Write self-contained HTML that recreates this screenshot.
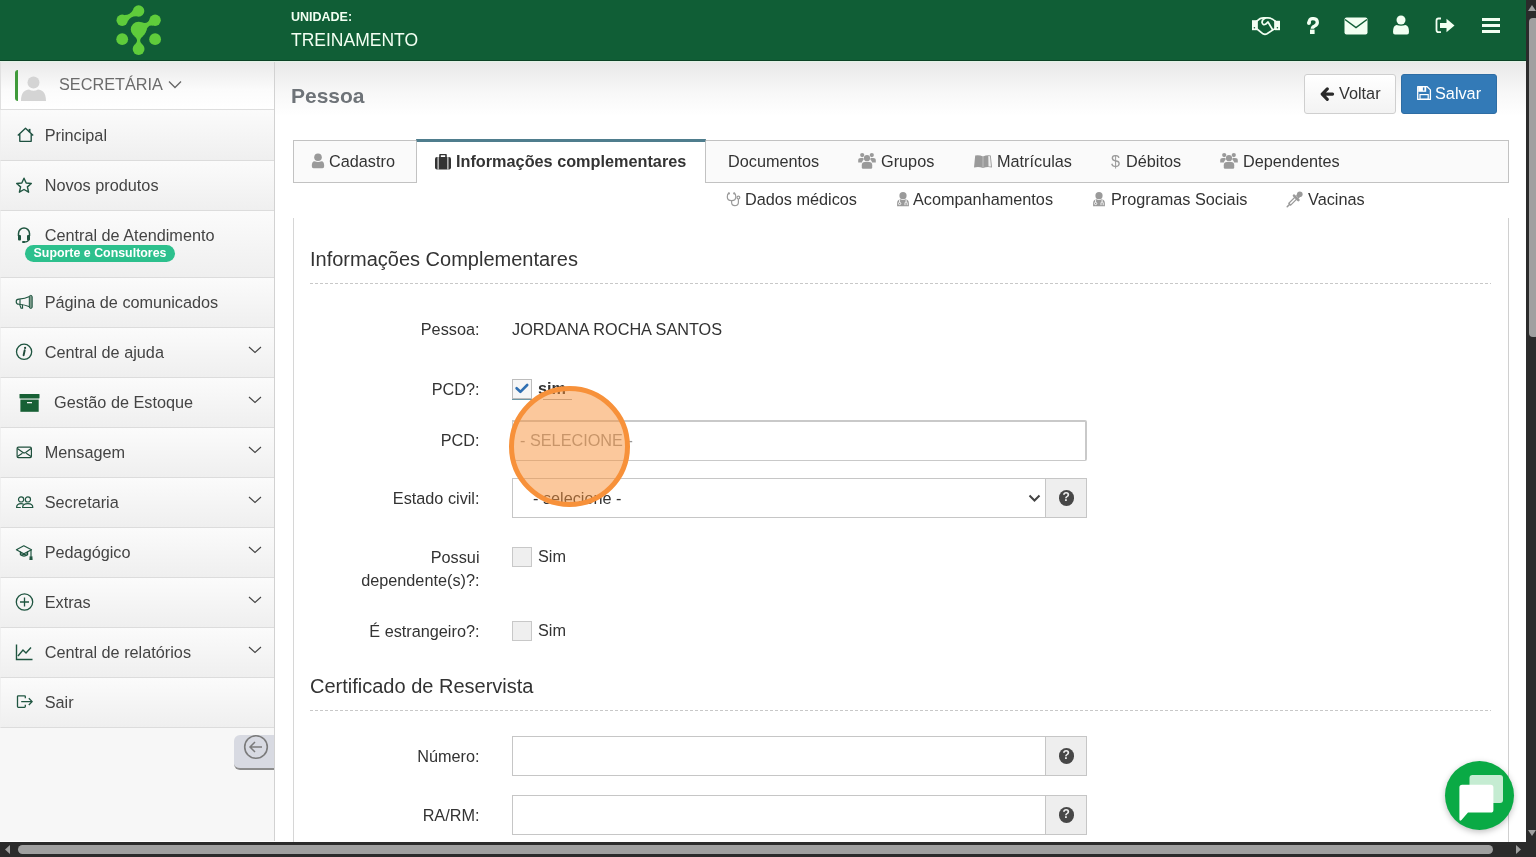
<!DOCTYPE html>
<html><head><meta charset="utf-8">
<style>
*{box-sizing:border-box;margin:0;padding:0}
html,body{width:1536px;height:857px;overflow:hidden;background:#fff;font-family:"Liberation Sans",sans-serif;color:#333}
.abs{position:absolute}
#wrap{position:absolute;left:0;top:0;width:1536px;height:857px;will-change:transform}
#hdr{position:absolute;left:0;top:0;width:1526px;height:61px;background:#105e36;border-bottom:1px solid #0b4226}
#hdr .u1{position:absolute;left:291px;top:11px;font-size:12.5px;line-height:12px;font-weight:bold;color:#f2fff2}
#hdr .u2{position:absolute;left:291px;top:31px;font-size:17.5px;line-height:18px;color:#f2fff2}
#side{position:absolute;left:0;top:61px;width:275px;height:780px;background:#f7f7f7;border-right:1px solid #d2d2d2}
#side .ub{position:absolute;left:0;top:0;width:274px;height:49px;background:linear-gradient(#e9e9e9,#fbfbfb 60%,#fff);border-bottom:1px solid #dedede;border-left:1px solid #e0e0e0}
#side .gbar{position:absolute;left:14px;top:9px;width:3px;height:31px;background:#3f9a3a;border-radius:3px 0 0 3px}
.mi{position:absolute;left:0;width:274px;border-bottom:1px solid #dcdcdc;border-left:1px solid #f0f0f0;background:linear-gradient(#fbfbfb,#f5f5f5 50%,#efefef);font-size:16.25px;line-height:16px;color:#444}
.mi .t{position:absolute;left:43.7px}
.mi svg.ic{position:absolute;left:14px}
.mi .chev{position:absolute;left:247px}
.badge{position:absolute;left:24px;top:34px;width:150px;height:17px;border-radius:9px;background:#2dc08d;color:#fff;font-size:12.4px;line-height:17px;font-weight:bold;text-align:center}
.collapse{position:absolute;left:234px;top:674px;width:40px;height:35px;background:#d8dae2;border-radius:6px 0 0 6px;border-bottom:2px solid #8c8c8c}
#main{position:absolute;left:275px;top:61px;width:1251px;height:781px;background:linear-gradient(#e8e8e8,#f7f7f7 30px,#fff 55px)}
#sbv{position:absolute;left:1526px;top:0;width:10px;height:842px;background:#2b2b2b}
#sbv .thumb{position:absolute;left:3px;top:18px;width:10px;height:319px;border-radius:4px;background:#a0a0a0}
#sbh{position:absolute;left:0;top:842px;width:1536px;height:15px;background:#2b2b2b}
#sbh .thumb{position:absolute;left:18px;top:3px;width:1475px;height:9px;border-radius:5px;background:#a0a0a0}
.btn{position:absolute;border-radius:3px;font-size:16.25px;line-height:16px}
.tt{position:absolute;font-size:16.25px;line-height:16px;color:#333;white-space:nowrap}
.lbl{position:absolute;left:300px;width:179.5px;text-align:right;font-size:16.25px;line-height:16px;color:#333}
.cb{position:absolute;width:20px;height:20px;border:1px solid #c8c8c8;background:#efefef}
.dash{position:absolute;left:310px;width:1181px;height:1px;background:repeating-linear-gradient(90deg,#c8c8c8 0 3px,transparent 3px 5px)}
.addon{position:absolute;left:1045px;width:42px;height:40px;border:1px solid #c6c6c6;background:#eee}
.addon .q{position:absolute;left:12.5px;top:11px;width:15.5px;height:15.5px;border-radius:50%;background:#474747;color:#eee;font-weight:bold;font-size:12px;line-height:15.5px;text-align:center}

</style></head><body><div id="wrap">
<div id="hdr">
  <svg class="abs" style="left:110px;top:2px" width="58" height="56" viewBox="110 2 58 56">
    <g fill="#5fcc3b">
      <circle cx="138.6" cy="11" r="5.7"/>
      <circle cx="122.2" cy="20.3" r="5.7"/>
      <circle cx="155.1" cy="20.3" r="5.7"/>
      <circle cx="138.6" cy="29.5" r="7.8"/>
      <circle cx="122.2" cy="39.2" r="5.9"/>
      <circle cx="155.1" cy="39.2" r="5.9"/>
      <circle cx="138.6" cy="49" r="5.9"/>
      <path d="M127.81 21.33 Q130.66 16.12 136.61 16.34 L132.99 9.97 Q130.14 15.18 124.19 14.96 Z"/>
      <path d="M146.26 30.97 Q147.48 24.39 153.07 25.63 L149.50 19.23 Q147.62 24.63 141.38 22.21 Z"/>
      <path d="M134.13 35.89 Q139.53 40.03 135.22 44.17 L141.98 44.17 Q137.67 40.03 143.07 35.89 Z"/>
    </g>
  </svg>
  <div class="u1">UNIDADE:</div>
  <div class="u2">TREINAMENTO</div>
  <!-- handshake -->
  <svg class="abs" style="left:1251px;top:16px" width="30" height="20" viewBox="0 0 30 20"><g fill="none" stroke="#f2fff2" stroke-width="1.7" stroke-linejoin="round" stroke-linecap="round"><path d="M6 5 Q9 1.8 12.5 1.8 H17 Q21 1.8 24 5"/><path d="M6 13 L12 17.8 Q14 19 16 17.8 L22.5 13.5 L24 13"/><path d="M14.5 2 Q11 3.5 11 6.5 Q12 9.5 14.5 8.3 L17 6 L21.5 13.5"/><path d="M6 5 V13 M24 5 V13"/></g><rect x="1" y="4.2" width="5" height="10" fill="#f2fff2"/><rect x="24" y="4.8" width="5" height="9.4" fill="#f2fff2"/><circle cx="3.4" cy="11.7" r="0.8" fill="#105e36"/><circle cx="26.4" cy="11.7" r="0.8" fill="#105e36"/></svg>
  <!-- question -->
  <svg class="abs" style="left:1305.5px;top:17px" width="14" height="18" viewBox="0 0 14 18"><path d="M3.2 6.3 Q2.8 1.6 6.8 1.6 Q11.3 1.6 11.3 5.4 Q11.3 7.6 8.8 8.9 Q6.3 10 6.3 11.8" fill="none" stroke="#f2fff2" stroke-width="3.3"/><circle cx="2.9" cy="6" r="1.9" fill="#f2fff2"/><rect x="4" y="12.6" width="4.6" height="4.4" fill="#f2fff2"/></svg>
  <!-- envelope -->
  <svg class="abs" style="left:1344px;top:17px" width="24" height="18" viewBox="0 0 24 18"><rect x="0.5" y="0.5" width="23" height="17" rx="2" fill="#f2fff2"/><path d="M1 2.5 L12 10.5 L23 2.5" fill="none" stroke="#105e36" stroke-width="1.5"/></svg>
  <!-- user -->
  <svg class="abs" style="left:1392px;top:15px" width="18" height="20" viewBox="0 0 18 20"><circle cx="9" cy="5" r="4.5" fill="#f2fff2"/><path d="M1 17 Q1 10.5 4.5 10 Q9 11.5 13.5 10 Q17 10.5 17 17 Q17 19.5 15 19.5 H3 Q1 19.5 1 17 Z" fill="#f2fff2"/></svg>
  <!-- sign out -->
  <svg class="abs" style="left:1435px;top:17px" width="21" height="17" viewBox="0 0 21 17"><path d="M6 1.5 H3.5 Q1.5 1.5 1.5 3.5 V13 Q1.5 15.2 3.5 15.2 H6" fill="none" stroke="#f2fff2" stroke-width="1.8"/><path d="M5 6 H11.5 V1.8 L19.5 8.5 L11.5 15.2 V11 H5 Z" fill="#f2fff2"/></svg>
  <!-- bars -->
  <svg class="abs" style="left:1482px;top:17px" width="19" height="17" viewBox="0 0 19 17"><rect x="0" y="1" width="18" height="3" fill="#f2fff2"/><rect x="0" y="7" width="18" height="3" fill="#f2fff2"/><rect x="0" y="13" width="18" height="3" fill="#f2fff2"/></svg>
</div>

<div id="side">
  <div class="ub">
    <div class="gbar"></div>
    <svg class="abs" style="left:19px;top:14px" width="27" height="27" viewBox="0 0 27 27"><circle cx="13.5" cy="7.5" r="6" fill="#d4d4d4"/><path d="M1 26 C1 17 5 15 9 14.5 Q13.5 17 18 14.5 C22 15 26 17 26 26 Z" fill="#d4d4d4"/></svg>
    <div class="abs" style="left:58px;top:14px;font-size:16.25px;color:#6b6b6b">SECRETÁRIA</div>
    <svg class="abs" style="left:167px;top:19px" width="14" height="9" viewBox="0 0 14 9"><path d="M1 1.5 L7 7.5 L13 1.5" fill="none" stroke="#666" stroke-width="1.3"/></svg>
  </div>
  <!-- Principal 110-160 -->
  <div class="mi" style="top:49px;height:51px">
    <svg class="ic" style="left:13.5px;top:17px" width="20" height="17" viewBox="0 0 20 17"><path d="M2.8 8.6 L10.5 1.3 L18.2 8.6 M4.8 6.8 V14.3 H16.2 V6.8" fill="none" stroke="#1d5040" stroke-width="1.35" stroke-linejoin="round"/><rect x="13.6" y="1.9" width="1.9" height="3.2" fill="#1d5040"/></svg>
    <div class="t" style="top:17px">Principal</div>
  </div>
  <div class="mi" style="top:100px;height:50px">
    <svg class="ic" style="top:16px" width="18" height="17" viewBox="0 0 18 17"><path d="M9 1.2 L11.2 6 L16.3 6.5 L12.4 9.9 L13.6 15.2 L9 12.5 L4.4 15.2 L5.6 9.9 L1.7 6.5 L6.8 6 Z" fill="none" stroke="#1f5540" stroke-width="1.4" stroke-linejoin="round"/></svg>
    <div class="t" style="top:16px">Novos produtos</div>
  </div>
  <div class="mi" style="top:150px;height:67px">
    <svg class="ic" style="top:15px" width="18" height="17" viewBox="0 0 18 17"><path d="M3.5 10 V7.5 A5.5 5.5 0 0 1 14.5 7.5 V10" fill="none" stroke="#1f5540" stroke-width="1.5"/><rect x="3" y="9" width="3" height="5.5" rx="1" fill="#1f5540"/><rect x="12" y="9" width="3" height="5.5" rx="1" fill="#1f5540"/><path d="M13.5 14 Q13 16 9 16" fill="none" stroke="#1f5540" stroke-width="1.3"/><rect x="7" y="15" width="3" height="2" rx="1" fill="#1f5540"/></svg>
    <div class="t" style="top:16px">Central de Atendimento</div>
    <div class="badge">Suporte e Consultores</div>
  </div>
  <div class="mi" style="top:217px;height:50px">
    <svg class="ic" style="top:16px" width="19" height="16" viewBox="0 0 19 16"><g fill="none" stroke="#1f5540" stroke-width="1.15" stroke-linejoin="round"><path d="M14.6 2.6 Q10 4.8 4 5.1 Q1.2 5.2 1.2 7.7 Q1.2 10.2 4 10.3 Q10 10.8 14.6 12.8"/><path d="M5 5.2 V10.2"/><path d="M4.6 10.4 L6.1 14.2 H7.6 L7.4 10.6"/></g><rect x="14.3" y="1.4" width="2.9" height="13" rx="1.4" fill="#7d9c8c" stroke="#1f5540" stroke-width="1"/></svg>
    <div class="t" style="top:16px">Página de comunicados</div>
  </div>
  <div class="mi" style="top:267px;height:50px">
    <svg class="ic" style="top:15px" width="20" height="20" viewBox="0 0 20 20"><circle cx="9.1" cy="8.8" r="7.6" fill="none" stroke="#1f5540" stroke-width="1.3"/><path d="M9.7 7.2 L8.6 12.3" fill="none" stroke="#1f4a3a" stroke-width="1.9" stroke-linecap="round"/><circle cx="10.1" cy="4.9" r="1.1" fill="#1f4a3a"/></svg>
    <div class="t" style="top:16px">Central de ajuda</div>
    <svg class="chev" style="top:18px" width="14" height="8" viewBox="0 0 14 8"><path d="M1 1 L7 6.5 L13 1" fill="none" stroke="#444" stroke-width="1.1"/></svg>
  </div>
  <div class="mi" style="top:317px;height:50px">
    <svg class="ic" style="left:17.5px;top:16px" width="22" height="19" viewBox="0 0 22 19"><rect x="0.5" y="0" width="20" height="4.4" rx="0.6" fill="#176035"/><rect x="1.4" y="5.6" width="18.3" height="12.2" fill="#176035"/><rect x="8" y="8" width="5" height="1.3" fill="#f0f0f0"/></svg>
    <div class="t" style="left:53px;top:16px">Gestão de Estoque</div>
    <svg class="chev" style="top:18px" width="14" height="8" viewBox="0 0 14 8"><path d="M1 1 L7 6.5 L13 1" fill="none" stroke="#444" stroke-width="1.1"/></svg>
  </div>
  <div class="mi" style="top:367px;height:50px">
    <svg class="ic" style="top:17.5px" width="19" height="14" viewBox="0 0 19 14"><g fill="none" stroke="#1f4f3c" stroke-width="1.2" stroke-linejoin="round"><rect x="2.1" y="1.1" width="14.3" height="10.5" rx="1.3"/><path d="M2.4 2.4 L8 6.4 Q9.3 7.3 10.6 6.4 L16.1 2.4 M2.4 10.6 L7.4 7.2 M16.1 10.6 L11.2 7.2"/></g></svg>
    <div class="t" style="top:16px">Mensagem</div>
    <svg class="chev" style="top:18px" width="14" height="8" viewBox="0 0 14 8"><path d="M1 1 L7 6.5 L13 1" fill="none" stroke="#444" stroke-width="1.1"/></svg>
  </div>
  <div class="mi" style="top:417px;height:50px">
    <svg class="ic" style="top:17px" width="19" height="14" viewBox="0 0 19 14"><g fill="none" stroke="#1f5540" stroke-width="1.2" stroke-linejoin="round"><circle cx="6.1" cy="4.4" r="2.6"/><circle cx="12.9" cy="4.4" r="2.6"/><path d="M7.6 12.5 Q7.6 8.6 12.9 8.6 Q17.8 8.6 17.8 12.5 Z"/><path d="M5.8 12.5 H1.6 Q1.6 8.6 6.1 8.6 Q7.6 8.6 8.6 9.2"/></g></svg>
    <div class="t" style="top:16px">Secretaria</div>
    <svg class="chev" style="top:18px" width="14" height="8" viewBox="0 0 14 8"><path d="M1 1 L7 6.5 L13 1" fill="none" stroke="#444" stroke-width="1.1"/></svg>
  </div>
  <div class="mi" style="top:467px;height:50px">
    <svg class="ic" style="top:17px" width="19" height="16" viewBox="0 0 19 16"><g fill="none" stroke="#1f5540" stroke-width="1.2" stroke-linejoin="round"><path d="M1.4 4.8 L8.8 0.8 L16.5 4.8 L8.8 8.8 Z"/><path d="M5.4 6.6 V9.8 Q9 12.3 12.6 9.8 V6.6"/><path d="M5.4 8.6 Q9 10.6 12.6 8.6"/><path d="M16 5 V11.5"/></g><path d="M14.6 11.3 H17.4 L17.6 15 H14.4 Z" fill="#1f5540"/></svg>
    <div class="t" style="top:16px">Pedagógico</div>
    <svg class="chev" style="top:18px" width="14" height="8" viewBox="0 0 14 8"><path d="M1 1 L7 6.5 L13 1" fill="none" stroke="#444" stroke-width="1.1"/></svg>
  </div>
  <div class="mi" style="top:517px;height:50px">
    <svg class="ic" style="top:14px;left:13px" width="20" height="20" viewBox="0 0 20 20"><circle cx="10.5" cy="10" r="8.2" fill="none" stroke="#1f5540" stroke-width="1.3"/><path d="M10.5 5.5 V14.5 M6 10 H15" fill="none" stroke="#1f5540" stroke-width="1.3"/></svg>
    <div class="t" style="top:16px">Extras</div>
    <svg class="chev" style="top:18px" width="14" height="8" viewBox="0 0 14 8"><path d="M1 1 L7 6.5 L13 1" fill="none" stroke="#444" stroke-width="1.1"/></svg>
  </div>
  <div class="mi" style="top:567px;height:50px">
    <svg class="ic" style="top:16px;left:13.3px" width="19" height="17" viewBox="0 0 19 17"><path d="M2.5 0.5 V15.5 H18.5 M4 12 L9 6 L12 9 L17 3.5" fill="none" stroke="#1f5540" stroke-width="1.4"/></svg>
    <div class="t" style="top:16px">Central de relatórios</div>
    <svg class="chev" style="top:18px" width="14" height="8" viewBox="0 0 14 8"><path d="M1 1 L7 6.5 L13 1" fill="none" stroke="#444" stroke-width="1.1"/></svg>
  </div>
  <div class="mi" style="top:617px;height:50px">
    <svg class="ic" style="top:17px;left:13.5px" width="19" height="14" viewBox="0 0 19 14"><path d="M10.3 3.2 V1.6 Q10.3 0.8 9.5 0.8 H3.3 Q2.5 0.8 2.5 1.6 V11.6 Q2.5 12.4 3.3 12.4 H9.5 Q10.3 12.4 10.3 11.6 V9.8 M6.2 6.6 H17.2 M13.8 3.2 L17.2 6.6 L13.8 10" fill="none" stroke="#1f5540" stroke-width="1.3" stroke-linejoin="round"/></svg>
    <div class="t" style="top:16px">Sair</div>
  </div>
  <div class="collapse">
    <svg class="abs" style="left:9px;top:-1px" width="26" height="26" viewBox="0 0 26 26"><circle cx="13" cy="13" r="11.3" fill="none" stroke="#7b7b7b" stroke-width="1.6"/><path d="M7 13 H19 M12 8 L7 13 L12 18" fill="none" stroke="#7b7b7b" stroke-width="1.5"/></svg>
  </div>
</div>

<div id="main"></div>
<div class="abs" style="left:0;top:61px;width:1526px;height:1px;background:#e2f2e6"></div>
<div class="abs" style="left:291px;top:84.5px;font-size:21px;font-weight:bold;color:#6e7378;line-height:21px">Pessoa</div>
<!-- buttons -->
<div class="btn" style="left:1304px;top:74px;width:92px;height:40px;background:linear-gradient(#fff,#f3f3f3);border:1px solid #cfcfcf;color:#333">
  <svg class="abs" style="left:15px;top:12px" width="15" height="15" viewBox="0 0 15 15"><path d="M12.6 7.1 H4.2 M7.3 1.9 L2.2 7.1 L7.3 12.3" fill="none" stroke="#2a2a2a" stroke-width="3.1" stroke-linejoin="round" stroke-linecap="round"/></svg>
  <div class="abs" style="left:34px;top:10px">Voltar</div>
</div>
<div class="btn" style="left:1401px;top:74px;width:96px;height:40px;background:#337ab7;border:1px solid #2e6da4;color:#fff">
  <svg class="abs" style="left:15px;top:11px" width="15" height="15" viewBox="0 0 15 15"><path d="M0.7 0.7 H10.2 L13.4 3.9 V13.4 H0.7 Z" fill="none" stroke="#fff" stroke-width="1.3" stroke-linejoin="round"/><rect x="1.2" y="1" width="8" height="4.8" fill="#fff"/><rect x="5.9" y="1.4" width="1.5" height="3.1" fill="#337ab7"/><rect x="3" y="8.6" width="8.2" height="4.6" fill="none" stroke="#fff" stroke-width="1.2"/></svg>
  <div class="abs" style="left:33px;top:10px">Salvar</div>
</div>
<!-- tabs -->
<div class="abs" style="left:293px;top:140px;width:1216px;height:43px;background:#fafafa;border:1px solid #c2c2c2"></div>
<div class="abs" style="left:416px;top:139px;width:290px;height:44px;background:#fff;border-top:3px solid #4f7d8d;border-left:1px solid #c2c2c2;border-right:1px solid #c2c2c2"></div>
<svg class="abs" style="left:311px;top:153px" width="14" height="16" viewBox="0 0 14 16"><circle cx="7" cy="4.2" r="3.8" fill="#9a9a9a"/><path d="M0.8 13 Q0.8 8.5 3.5 8.3 Q7 9.8 10.5 8.3 Q13.2 8.5 13.2 13 Q13.2 15.2 11.5 15.2 H2.5 Q0.8 15.2 0.8 13 Z" fill="#9a9a9a"/></svg>
<div class="tt" style="left:329px;top:153px">Cadastro</div>
<svg class="abs" style="left:434px;top:154px" width="18" height="16" viewBox="0 0 18 16"><path d="M6 3 V1.2 Q6 0.5 6.8 0.5 H11.2 Q12 0.5 12 1.2 V3" fill="none" stroke="#333" stroke-width="1.6"/><rect x="1" y="3" width="16" height="12.5" rx="2" fill="#333"/><rect x="3.6" y="3" width="1" height="12.5" fill="#fff"/><rect x="13.4" y="3" width="1" height="12.5" fill="#fff"/></svg>
<div class="tt" style="left:456px;top:153px;font-weight:bold">Informações complementares</div>
<div class="tt" style="left:728px;top:153px">Documentos</div>
<svg class="abs" style="left:858px;top:153px" width="18" height="16" viewBox="0 0 18 16"><g fill="#9a9a9a"><circle cx="9" cy="5.2" r="3.1"/><circle cx="4.2" cy="2.1" r="2.1"/><circle cx="13.8" cy="2.1" r="2.1"/><path d="M0.2 9.6 V7.3 Q0.2 4.9 2.8 4.9 H5.2 Q5.8 5.5 5.6 6.7 Q4.2 7.7 3.8 9.6 Z"/><path d="M17.8 9.6 V7.3 Q17.8 4.9 15.2 4.9 H12.8 Q12.2 5.5 12.4 6.7 Q13.8 7.7 14.2 9.6 Z"/><path d="M3.8 14.6 V12.2 Q3.8 8.9 6.8 8.9 H11.2 Q14.2 8.9 14.2 12.2 V14.6 Q14.2 15.8 13 15.8 H5 Q3.8 15.8 3.8 14.6 Z"/></g></svg>
<div class="tt" style="left:881px;top:153px">Grupos</div>
<svg class="abs" style="left:973px;top:154px" width="20" height="15" viewBox="0 0 20 15"><path d="M10 2.6 Q6 0.6 2.2 1.6 L1 13.6 Q5.5 12.3 10 14 Q14.5 12.3 19 13.6 L17.8 1.6 Q14 0.6 10 2.6 Z" fill="#9a9a9a"/><path d="M15.3 2 Q16.6 2 17 2.2 L18 12.6 Q16.8 12.4 15.5 12.6 Z" fill="#fff" opacity="0.85"/><path d="M10 2.8 V13.6" stroke="#c8c8c8" stroke-width="0.8"/></svg>
<div class="tt" style="left:997px;top:153px">Matrículas</div>
<div class="tt" style="left:1111px;top:153px;color:#9a9a9a">$</div>
<div class="tt" style="left:1126px;top:153px">Débitos</div>
<svg class="abs" style="left:1220px;top:153px" width="18" height="16" viewBox="0 0 18 16"><g fill="#9a9a9a"><circle cx="9" cy="5.2" r="3.1"/><circle cx="4.2" cy="2.1" r="2.1"/><circle cx="13.8" cy="2.1" r="2.1"/><path d="M0.2 9.6 V7.3 Q0.2 4.9 2.8 4.9 H5.2 Q5.8 5.5 5.6 6.7 Q4.2 7.7 3.8 9.6 Z"/><path d="M17.8 9.6 V7.3 Q17.8 4.9 15.2 4.9 H12.8 Q12.2 5.5 12.4 6.7 Q13.8 7.7 14.2 9.6 Z"/><path d="M3.8 14.6 V12.2 Q3.8 8.9 6.8 8.9 H11.2 Q14.2 8.9 14.2 12.2 V14.6 Q14.2 15.8 13 15.8 H5 Q3.8 15.8 3.8 14.6 Z"/></g></svg>
<div class="tt" style="left:1243px;top:153px">Dependentes</div>
<!-- row 2 -->
<svg class="abs" style="left:726px;top:192px" width="15" height="15" viewBox="0 0 15 15"><g fill="none" stroke="#9a9a9a" stroke-width="1.2"><path d="M2.6 1.4 Q1.3 2 1.3 5 Q1.3 8.6 5.6 8.6 Q9.8 8.6 9.8 5 Q9.8 2 8.5 1.4"/><path d="M5.6 8.6 V10.3 Q5.6 13.6 8.8 13.6 Q12.4 13.6 12.4 10.2 V7"/><circle cx="12.4" cy="5.6" r="1.4"/></g><circle cx="2.9" cy="1.4" r="1.1" fill="#9a9a9a"/><circle cx="8.2" cy="1.4" r="1.1" fill="#9a9a9a"/></svg>
<div class="tt" style="left:745px;top:191px">Dados médicos</div>
<svg class="abs" style="left:896px;top:192px" width="14" height="15" viewBox="0 0 14 15"><circle cx="7" cy="3.7" r="3.6" fill="#9a9a9a"/><path d="M1.1 14.2 V11.6 Q1.1 7.6 4.4 7.3 Q7 8.6 9.6 7.3 Q12.9 7.6 12.9 11.6 V14.2 Z" fill="#9a9a9a"/><g fill="none" stroke="#fff" stroke-width="0.9"><path d="M3.6 7.6 V10.3"/><circle cx="3.6" cy="11.5" r="1.15"/><path d="M10.1 7.6 V9.9 M9 13.2 V11.1 Q9 10 10.1 10 Q11.2 10 11.2 11.1 V13.2"/></g></svg>
<div class="tt" style="left:913px;top:191px">Acompanhamentos</div>
<svg class="abs" style="left:1092px;top:192px" width="14" height="15" viewBox="0 0 14 15"><circle cx="7" cy="3.7" r="3.6" fill="#9a9a9a"/><path d="M1.1 14.2 V11.6 Q1.1 7.6 4.4 7.3 Q7 8.6 9.6 7.3 Q12.9 7.6 12.9 11.6 V14.2 Z" fill="#9a9a9a"/><g fill="none" stroke="#fff" stroke-width="0.9"><path d="M3.6 7.6 V10.3"/><circle cx="3.6" cy="11.5" r="1.15"/><path d="M10.1 7.6 V9.9 M9 13.2 V11.1 Q9 10 10.1 10 Q11.2 10 11.2 11.1 V13.2"/></g></svg>
<div class="tt" style="left:1111px;top:191px">Programas Sociais</div>
<svg class="abs" style="left:1286px;top:191px" width="17" height="17" viewBox="0 0 17 17"><g fill="#9a9a9a" stroke="none"><circle cx="13.8" cy="3.2" r="2.8"/><path d="M10 4.2 L13 1.6 L15.6 4.4 L12.6 7.6 Z"/></g><path d="M8 4.6 L12.4 9" stroke="#9a9a9a" stroke-width="2.6" stroke-linecap="round"/><path d="M10.3 6.7 L3.3 13.7" stroke="#9a9a9a" stroke-width="3.8"/><path d="M9.2 7.8 L4.2 12.8" stroke="#fff" stroke-width="1.3"/><path d="M3.6 13.4 L1.2 15.8" stroke="#9a9a9a" stroke-width="1.5" stroke-linecap="round"/></svg>
<div class="tt" style="left:1308px;top:191px">Vacinas</div>
<!-- panel -->
<div class="abs" style="left:293px;top:218px;width:1216px;height:640px;border-left:1px solid #d6d6d6;border-right:1px solid #d0d0d0"></div>
<div class="abs" style="left:310px;top:249px;font-size:20px;line-height:20px;color:#333">Informações Complementares</div>
<div class="dash" style="top:283px"></div>
<div class="lbl" style="top:321px">Pessoa:</div>
<div class="tt" style="left:512px;top:321px;color:#333">JORDANA ROCHA SANTOS</div>
<div class="lbl" style="top:381px">PCD?:</div>
<div class="cb" style="left:512px;top:379px;background:#f6f6f6;border-color:#bcbcbc"></div>
<svg class="abs" style="left:513px;top:380px" width="18" height="16" viewBox="0 0 18 16"><path d="M3.6 8.2 L7.4 11.8 L14.2 5" fill="none" stroke="#2f6fb2" stroke-width="2.6" stroke-linecap="round" stroke-linejoin="round"/></svg>
<div class="abs" style="left:512px;top:399px;width:20px;height:1px;background:#6e98a6"></div>
<div class="abs" style="left:543px;top:399px;width:29px;height:1px;background:#aaa"></div>
<div class="tt" style="left:538px;top:380px;font-weight:bold">sim</div>
<div class="lbl" style="top:432px">PCD:</div>
<div class="abs" style="left:512px;top:420px;width:575px;height:41px;border:1px solid #c9c9c9;border-top-width:2px;border-right-width:2px;border-radius:0 2px 2px 0;background:#fff"></div>
<div class="tt" style="left:520px;top:432px;color:#999">- SELECIONE -</div>
<div class="lbl" style="top:490px">Estado civil:</div>
<div class="abs" style="left:512px;top:478px;width:534px;height:40px;border:1px solid #c6c6c6;background:#fff"></div>
<div class="tt" style="left:533px;top:490px">- selecione -</div>
<svg class="abs" style="left:1028px;top:494px" width="13" height="8" viewBox="0 0 13 8"><path d="M1.5 1.5 L6.5 6.5 L11.5 1.5" fill="none" stroke="#444" stroke-width="2"/></svg>
<div class="addon" style="top:478px"><div class="q">?</div></div>
<div class="lbl" style="top:546px;line-height:23px;height:46px">Possui<br>dependente(s)?:</div>
<div class="cb" style="left:512px;top:547px"></div>
<div class="tt" style="left:538px;top:548px">Sim</div>
<div class="lbl" style="top:623px">É estrangeiro?:</div>
<div class="cb" style="left:512px;top:621px"></div>
<div class="tt" style="left:538px;top:622px">Sim</div>
<div class="abs" style="left:310px;top:676px;font-size:20px;line-height:20px;color:#333">Certificado de Reservista</div>
<div class="dash" style="top:710px"></div>
<div class="lbl" style="top:748px">Número:</div>
<div class="abs" style="left:512px;top:736px;width:534px;height:40px;border:1px solid #c6c6c6;background:#fff"></div>
<div class="addon" style="top:736px"><div class="q">?</div></div>
<div class="lbl" style="top:807px">RA/RM:</div>
<div class="abs" style="left:512px;top:795px;width:534px;height:40px;border:1px solid #c6c6c6;background:#fff"></div>
<div class="addon" style="top:795px"><div class="q">?</div></div>
<!-- orange highlight -->
<div class="abs" style="left:509px;top:386px;width:121px;height:121px;border-radius:50%;border:5px solid #f7913a;background:rgba(247,146,58,0.5)"></div>
<!-- chat -->
<div class="abs" style="left:1445px;top:761px;width:69px;height:69px;border-radius:50%;background:#0aaa45;box-shadow:0 2px 6px rgba(0,0,0,0.25)"></div>
<svg class="abs" style="left:1445px;top:761px" width="69" height="69" viewBox="0 0 69 69"><rect x="24.5" y="14" width="33.5" height="28" rx="3" fill="#c5ecd2"/><path d="M14.4 26.5 Q14.4 23.7 17.2 23.7 H45.6 Q48.4 23.7 48.4 26.5 V49 Q48.4 51.6 45.6 51.6 H23 L16.5 59 Q14.4 61 14.4 58 Z" fill="#fff"/></svg>

<div id="sbv"><div class="thumb"></div><svg class="abs" style="left:2px;top:5px" width="8" height="6" viewBox="0 0 8 6"><path d="M4 0 L8 6 H0 Z" fill="#a0a0a0"/></svg><svg class="abs" style="left:2px;top:830px" width="8" height="6" viewBox="0 0 8 6"><path d="M4 6 L8 0 H0 Z" fill="#a0a0a0"/></svg></div>
<div id="sbh"><div class="thumb"></div><svg class="abs" style="left:5px;top:3px" width="6" height="9" viewBox="0 0 6 9"><path d="M0 4.5 L5 0 V9 Z" fill="#a0a0a0"/></svg><svg class="abs" style="left:1515px;top:3px" width="6" height="9" viewBox="0 0 6 9"><path d="M6 4.5 L1 0 V9 Z" fill="#a0a0a0"/></svg></div>
</div></body></html>
